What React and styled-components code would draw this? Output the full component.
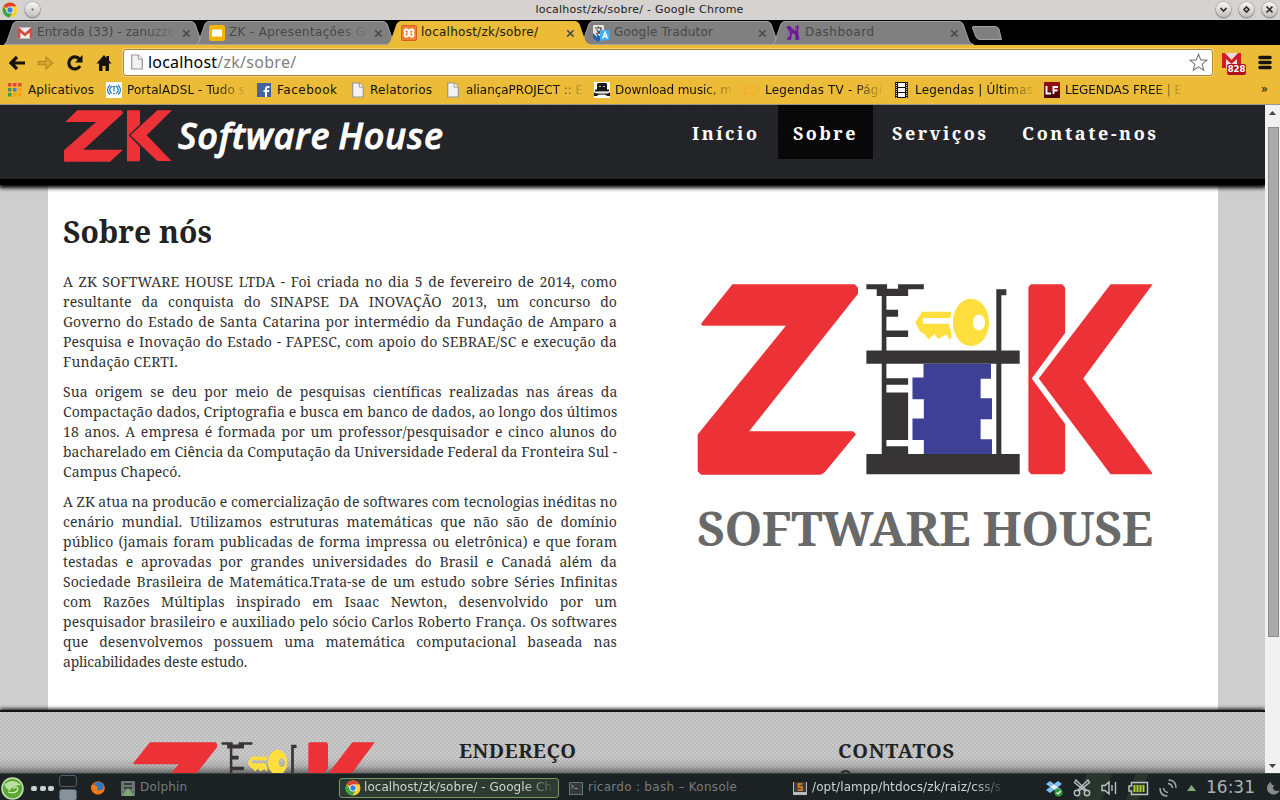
import React, { useLayoutEffect, useRef } from "react";
import styled, { createGlobalStyle, css } from "styled-components";

const GlobalStyle = createGlobalStyle`
  * { box-sizing: border-box; }
  body { margin: 0; background: #000; }
  h1, h2, p { margin: 0; }
  svg { display: block; flex: none; }
`;

const ui = '"DejaVu Sans", sans-serif';
const serif = '"Droid Serif", "Noto Serif", "DejaVu Serif Condensed", "DejaVu Serif", serif';

/* Text whose tracking is adjusted so that it spans a given width. */
const FitSpan = styled.span`
  display: inline-block;
  white-space: pre;
`;
function Fit({ width, children }) {
  const ref = useRef(null);
  useLayoutEffect(() => {
    const el = ref.current;
    el.style.letterSpacing = "0px";
    const natural = el.getBoundingClientRect().width;
    el.style.letterSpacing = (width - natural) / Math.max(1, children.length - 1) + "px";
  }, [width, children]);
  return <FitSpan ref={ref}>{children}</FitSpan>;
}

const Screen = styled.div`
  width: 1280px;
  height: 800px;
  overflow: hidden;
  display: flex;
  flex-direction: column;
  font-family: ${ui};
`;

/* ---------- window title ---------- */
const TitleBar = styled.header`
  height: 20px;
  flex: none;
  display: flex;
  align-items: center;
  justify-content: space-between;
  padding: 0 3px 1px 2px;
  background: #d6d2cf;
  color: #1c1c1c;
  font-size: 11px;
`;
const ButtonGroup = styled.div`
  display: flex;
  align-items: center;
  justify-content: ${(p) => (p.$end ? "flex-end" : "flex-start")};
  gap: ${(p) => p.$gap}px;
  width: 68px;
`;
const WindowTitle = styled.div`
  padding: 1px 0 0 0;
  line-height: 18px;
`;
const RoundButton = styled.span`
  width: 15px;
  height: 15px;
  border-radius: 50%;
  display: grid;
  place-items: center;
  background: linear-gradient(#f8f7f6, #c2bfbc);
  box-shadow: 0 1px 2px #777, 0 0 0 0.5px #999;
`;

/* ---------- tabs ---------- */
const TabStrip = styled.nav`
  height: 25px;
  flex: none;
  display: flex;
  align-items: flex-end;
  padding-left: 4px;
  background: #000;
`;
const Tab = styled.div`
  position: relative;
  width: 202px;
  height: 25px;
  margin-right: -10px;
  flex: none;
  z-index: ${(p) => (p.$active ? 2 : 1)};
  display: flex;
  align-items: center;
  padding: 1px 15px 0 13px;
  color: ${(p) => (p.$active ? "#1a1a10" : "#474747")};
  font-size: 12px;
`;
const TabShape = styled.svg`
  position: absolute;
  left: 0;
  top: 0;
  z-index: -1;
`;
const TabTitle = styled.div`
  flex: 1;
  margin: 0 6px 0 4px;
  height: 18px;
  line-height: 17px;
  overflow: hidden;
  white-space: nowrap;
  ${(p) => p.$fade && css`mask-image: linear-gradient(90deg, #000 110px, transparent 143px);`}
`;
const NewTab = styled.svg`
  margin: 0 0 4px 7px;
  align-self: flex-end;
`;

/* ---------- toolbar ---------- */
const Toolbar = styled.div`
  height: 35px;
  flex: none;
  display: flex;
  align-items: center;
  background: #ecbb37;
  padding: 0 8px 0 8px;
`;
const NavIcons = styled.div`
  display: flex;
  align-items: center;
  gap: 11px;
  width: 115px;
`;
const AddressBar = styled.div`
  width: 1090px;
  height: 27px;
  display: flex;
  align-items: center;
  padding: 0 4px 1px 7px;
  background: #fff;
  border: 1px solid #a8852a;
  border-radius: 3px;
  box-shadow: 0 0 0 1px #f2d078;
  color: #000;
  font-size: 16px;
`;
const Url = styled.div`
  flex: 1;
  margin-left: 5px;
  font-family: "Noto Sans", sans-serif;
  line-height: 22px;
  white-space: nowrap;
  i { font-style: normal; color: #808080; }
`;
const MailBadge = styled.div`
  position: relative;
  margin: 5px 12px 0 9px;
  width: 24px;
  height: 24px;
`;
const BadgeCount = styled.span`
  position: absolute;
  left: 5px;
  top: 11px;
  width: 19px;
  height: 11px;
  border-radius: 2px;
  background: #b3101e;
  color: #fff;
  font: bold 8.5px/11px ${ui};
  text-align: center;
`;

/* ---------- bookmarks ---------- */
const BookmarkBar = styled.div`
  height: 25px;
  flex: none;
  display: flex;
  align-items: flex-start;
  background: #ecbb37;
  border-bottom: 1px solid #98958c;
  color: #14130b;
  font-size: 12px;
`;
const Bookmark = styled.div`
  width: ${(p) => p.$w}px;
  height: 20px;
  display: flex;
  align-items: center;
  gap: ${(p) => p.$gap ?? 4}px;
  flex: none;
`;
const BookmarkText = styled.div`
  width: ${(p) => p.$w + 1}px;
  line-height: 18px;
  height: 19px;
  overflow: hidden;
  white-space: nowrap;
  ${(p) => p.$fade && css`mask-image: linear-gradient(90deg, #000 ${p.$w - 28}px, transparent ${p.$w + 2}px);`}
`;
const Overflow = styled.div`
  margin-left: auto;
  padding-right: 12px;
  line-height: 19px;
`;

/* ---------- page ---------- */
const Viewport = styled.div`
  height: 668px;
  flex: none;
  display: flex;
`;
const Page = styled.div`
  width: 1265px;
  height: 668px;
  overflow: hidden;
  background: #cecece;
  font-family: ${serif};
`;
const SiteHeader = styled.div`
  position: relative;
  height: 80px;
  display: flex;
  justify-content: space-between;
  border-bottom: 6px solid #000;
  box-shadow: 0 2px 4px 1px #000;
  background:
    repeating-linear-gradient(90deg, rgba(255,255,255,.012) 0 1px, transparent 1px 3px),
    repeating-linear-gradient(0deg, rgba(0,0,0,.06) 0 1px, transparent 1px 3px),
    #232428;
`;
const Brand = styled.div`
  display: flex;
  align-items: flex-start;
  padding: 4.5px 0 0 64px;
`;
const BrandName = styled.div`
  margin: 0 0 0 6px;
  font: italic 600 36px/51px "Open Sans", "Noto Sans", sans-serif;
  word-spacing: -2px;
  color: #fff;
  -webkit-text-stroke: 0.8px #fff;
`;
const Menu = styled.nav`
  display: flex;
  gap: 4px;
  padding-right: 93px;
`;
const MenuItem = styled.a`
  width: ${(p) => p.$w}px;
  height: 54px;
  padding-left: 15px;
  background: ${(p) => (p.$active ? "#080808" : "transparent")};
  color: #fff;
  font-size: 18px;
  font-weight: bold;
  line-height: 56px;
`;
const Main = styled.main`
  width: 1170px;
  height: 525px;
  margin-left: 48px;
  padding: 27px 0 0 15px;
  background: #fff;
  display: flex;
  color: #333;
`;
const About = styled.section`
  width: 554px;
`;
const Heading = styled.h1`
  height: 60px;
  font-size: 30px;
  font-weight: bold;
  line-height: 40px;
  color: #222;
`;
const Paragraph = styled.p`
  margin-bottom: 10px;
  font-size: 14px;
  line-height: 20px;
`;
const Line = styled.span`
  display: block;
  height: 20px;
  white-space: nowrap;
`;
const LogoBlock = styled.section`
  margin: 72px 0 0 80px;
  width: 458px;
`;
const LogoCaption = styled.div`
  margin-top: 23px;
  font-size: 48px;
  line-height: 60px;
  font-weight: bold;
  color: #696969;
`;
const Footer = styled.footer`
  position: relative;
  height: 63px;
  display: flex;
  padding-left: 131px;
  border-top: 2px solid #151515;
  box-shadow: 0 -1px 4px #000;
  background:
    linear-gradient(transparent 46px, rgba(0,0,0,.1) 54px, rgba(0,0,0,.45) 61px),
    linear-gradient(90deg, #b4b4b4 2px, transparent 2px) 0 0 / 4px 4px,
    #cacaca;
  background:
    linear-gradient(transparent 46px, rgba(0,0,0,.1) 54px, rgba(0,0,0,.45) 61px),
    conic-gradient(#bababa 25%, transparent 0 50%, #bababa 0 75%, transparent 0) 0 0 / 4px 4px,
    #cacaca;
`;
const FooterLogo = styled.div`
  width: 328px;
  padding-top: 30px;
`;
const FooterColumn = styled.div`
  width: 379px;
  padding-top: 26px;
  font-size: 20px;
  line-height: 26px;
  font-weight: bold;
  color: #222;
`;
const Dot = styled.i`
  display: block;
  width: 11px;
  height: 11px;
  margin: 6px 0 0 2px;
  border: 2px solid #222;
  border-radius: 50%;
`;
const ScrollTrack = styled.div`
  width: 15px;
  display: flex;
  flex-direction: column;
  align-items: center;
  background: #f1f1f1;
`;
const ScrollEnd = styled.div`
  height: ${(p) => p.$h}px;
  padding-top: 6px;
`;
const Thumb = styled.div`
  width: 11px;
  height: 510px;
  margin-left: 1px;
  background: #aaa;
  border: 1px solid #8c8c8c;
`;

/* ---------- desktop panel ---------- */
const Panel = styled.footer`
  height: 27px;
  flex: none;
  display: flex;
  align-items: center;
  border-top: 1px solid #39403f;
  background:
    linear-gradient(110deg, transparent 1020px, #29352b 1022px 1043px, transparent 1046px 1066px, #29352b 1068px 1078px, transparent 1080px),
    #1c2224;
  font-size: 12px;
  color: #cdd2d2;
  padding-top: 2px;
`;
const Launcher = styled.div`
  width: 107px;
  display: flex;
  align-items: center;
  padding-left: 1px;
`;
const Dots = styled.div`
  display: flex;
  gap: 2.5px;
  margin: 0 5px 0 7px;
  i { width: 6px; height: 5px; border-radius: 2px; background: #c6d2d2; }
`;
const Pager = styled.div`
  display: flex;
  flex-direction: column;
  gap: 2px;
  margin-right: 14px;
  i { width: 18px; height: 12px; border-radius: 3px; border: 1px solid #50606a; }
  i + i { background: #87939a; }
`;
const Task = styled.div`
  width: ${(p) => p.$w}px;
  height: 20px;
  flex: none;
  display: flex;
  align-items: center;
  gap: ${(p) => p.$gap ?? 5}px;
  margin-left: ${(p) => p.$ml}px;
  padding-left: 5px;
  border-radius: 3px;
  border: 1px solid ${(p) => (p.$active ? "#729968" : "transparent")};
  background: ${(p) => (p.$active ? "#2d3b30" : "transparent")};
  color: ${(p) => (p.$dim ? "#747d7e" : "#ced4d3")};
`;
const TaskText = styled.div`
  flex: 1;
  height: 18px;
  line-height: 16px;
  overflow: hidden;
  white-space: nowrap;
  ${(p) => p.$fade && css`mask-image: linear-gradient(90deg, #000 ${p.$fade}px, transparent ${p.$fade + 32}px);`}
`;
const Tray = styled.div`
  display: flex;
  align-items: center;
  margin-left: auto;
  gap: 10px;
`;
const Clock = styled.div`
  font-size: 17px;
  line-height: 20px;
  color: #a9b2b3;
  padding-bottom: 2px;
`;

/* ---------- icons ---------- */
const Gmail = () => (
  <svg width="16" height="16" viewBox="0 0 16 16">
    <path d="M1 2.500h14v11H1z" fill="#eee" />
    <path d="M1 13.500V2.500h1l6 5.500 6-5.500h1v11h-2.300V7.500L8 11.500 3.300 7.500v6z" fill="#d54b3d" />
  </svg>
);
const Slides = () => (
  <svg width="16" height="16"><rect width="16" height="16" rx="2" fill="#f4b400" /><rect x="3" y="4.500" width="10" height="7" fill="#fff" /></svg>
);
const Xampp = () => (
  <svg width="16" height="16" viewBox="0 0 16 16">
    <rect width="16" height="16" rx="2" fill="#d9601c" />
    <rect x="1" y="1" width="14" height="14" rx="1" fill="#ee7f35" />
    <path d="M5 4.200Q7 4.200 8 6.500 9 4.200 11 4.200 13 5 12.300 7L11.500 8l.8 1Q13 11.500 11 11.800 9 11.800 8 9.500 7 11.800 5 11.800 3 11 3.700 9L4.500 8l-.8-1Q3 5 5 4.200z" fill="none" stroke="#fff" strokeWidth="1.900" />
    <path d="M6.500 8h3" stroke="#fff" strokeWidth="2" />
  </svg>
);
const Translate = () => (
  <svg width="17" height="17" viewBox="0 0 17 17">
    <rect width="11" height="12" rx="1" fill="#e4e4dc" />
    <path d="M2 3h7M5.500 1.500V3M3 9c3-1 5-3 5-6M3.500 4.500C5 7 6 8 8 9" stroke="#444" strokeWidth="1.200" fill="none" />
    <path d="M0 8l4 4V9l5 4-4 4-5-4z" fill="#1e62b8" />
    <path d="M7 5h9.500v10L7 16z" fill="#45aaf0" />
    <path d="M9.500 13.500L12 7l2.500 6.500M10.300 11.500h3.400" stroke="#fff" strokeWidth="1.300" fill="none" />
  </svg>
);
const Purple = () => (
  <svg width="16" height="16" viewBox="0 0 16 16">
    <path d="M1 2l3.500-1.500L8 4l2 2V1l4-.5-1 6 1.500 8-4 .8-.5-6L7 8.500 6 15l-4.500-.5L4 11 3.500 5z" fill="#6b1b9a" />
    <path d="M11 1v5M4 12l1-6" stroke="#a04fc8" />
  </svg>
);
const Close = () => (
  <svg width="9" height="9" viewBox="0 0 9 9"><path d="M1.200 1.200l6.400 6.400M7.600 1.200L1.200 7.600" stroke="#484848" strokeWidth="1.500" /></svg>
);
const Chrome = () => (
  <svg width="16" height="16" viewBox="0 0 16 16">
    <circle cx="8" cy="8" r="7.500" fill="#fbd130" />
    <path d="M8 8L1.500 4.200A7.500 7.500 0 0 1 14.500 4.300L8 4.500z" fill="#dd4433" />
    <path d="M1.500 4.300A7.500 7.500 0 0 0 7.500 15.500L11 9.500 5 9.500z" fill="#3fa34d" />
    <circle cx="8" cy="8" r="3.500" fill="#fff" /><circle cx="8" cy="8" r="2.700" fill="#3b7de0" />
  </svg>
);
const Doc = ({ s = 16 }) => (
  <svg width="12" height={s} viewBox="0 0 12 16">
    <path d="M.7 1h6.600l4 4.200v9.800H.7z" fill="#f3f3f3" stroke="#979797" strokeWidth="1.200" />
    <path d="M7.300 1v4.200h4" fill="#fff" stroke="#979797" />
  </svg>
);
const Apps = () => (
  <svg width="14" height="14">
    {["#e8453c", "#e8453c", "#e8453c", "#3c9a4e", "#3b7de0", "#f7a400", "#3c9a4e", "#f7a400", "#f7a400"].map((c, i) => (
      <rect key={i} x={(i % 3) * 5} y={Math.floor(i / 3) * 5} width="3.500" height="3.500" fill={c} />
    ))}
  </svg>
);
const Portal = () => (
  <svg width="16" height="16" viewBox="0 0 16 16">
    <rect width="16" height="16" fill="#fff" />
    <path d="M4 3Q-1 8 4 12.500M12 3q5 5 0 9.500M6 4Q1.500 8 6 11.500M10 4q4.500 4 0 7.500M6.500 4.500h3M8 4.500v5M7 11.500h2" fill="none" stroke="#2078c0" strokeWidth="1.200" />
  </svg>
);
const Facebook = () => (
  <svg width="14" height="14" viewBox="0 0 14 14"><rect width="14" height="14" fill="#4562a5" /><path d="M9 14V8.500M12.500 4H11q-2 0-2 2v8M6.500 8H12" stroke="#fff" strokeWidth="2" fill="none" /></svg>
);
const Pirate = () => (
  <svg width="16" height="16" viewBox="0 0 16 16">
    <rect width="16" height="16" fill="#fff" />
    <path d="M4 1h8l1 1v6H3V2zM1 7.500h14v2H1zM0 10.500l3 1h10l3-1v3.500h-3l-1-1H4l-1 1H0z" fill="#191919" />
    <path d="M5 4.500h2M9 4.500h2M5 12h6M4 10h8" stroke="#bbb" />
  </svg>
);
const Cloud = () => (
  <svg width="16" height="16" viewBox="0 0 16 16"><path d="M3 5q5-3 8 0 5 0 4 3 0 4-4 4H3Q0 11 2 8 0 6 3 5z" fill="#efb935" stroke="#f3ac2c" strokeWidth="1.200" /></svg>
);
const Film = () => (
  <svg width="13" height="16" viewBox="0 0 13 16">
    <rect width="13" height="16" fill="#111" />
    <path d="M3 1h7v4H3zM3 6h7v4H3zM3 11h7v4H3z" fill="#f6f6f6" />
    <path d="M1.300 1v15M11.700 1v15" stroke="#fff" strokeDasharray="1 1" />
  </svg>
);
const LF = () => (
  <svg width="16" height="16" viewBox="0 0 16 16"><rect width="16" height="16" rx="1" fill="#8f0c0f" /><rect y="9" width="16" height="7" fill="#4d0506" /><path d="M2.500 4v7.500h4.500M9.500 12V5h4.500M9.500 8.500h4" fill="none" stroke="#fff" strokeWidth="1.900" /></svg>
);
const Firefox = () => (
  <svg width="14" height="14" viewBox="0 0 14 14"><circle cx="7" cy="7" r="6.800" fill="#e66000" /><circle cx="7.500" cy="5.500" r="4.800" fill="#2f78c4" /><path d="M.5 4Q3 3 5 5l2 1-1 2q2 3 6 0 2-4 0-6 3 6 0 9-6 4-10 0-3-4-1.500-7z" fill="#f07a18" /></svg>
);

const Z_PATH = "M160 42H526L536 52V70L210 482H521L530 491L442 598Q431 612 420 612H66L56 602V492L320 166H70L66 160Z";
const EmblemLogo = ({ width, height }) => (
  <svg width={width} height={height} viewBox="54 41 1365 572" preserveAspectRatio="none">
    <g fill="#ec3237">
      <path d={Z_PATH} />
      <path d="M1054 42H1148L1156 52V188L1056 324L1156 460V600L1148 611H1054L1046 601V50Z" />
      <path d="M1292 42H1418L1210 324L1416 606V611H1292L1077 324Z" />
    </g>
    <g fill="#373435">
      <path d="M561 42H623V55H656V42H733V57H686V77H621V118H656V139H621V180H686V200H621V240H950V57H980V75H965V240H1020V280H965V550H1020V611H561V550H607V280H561V240H607V77H592V57H561Z M621 280V323H686V343H621V366H686V508H621V527H686V550H950V280Z" fillRule="evenodd" />
    </g>
    <path d="M732 280H934V325H903V383H937V446H903V506H937V550H733V508H699V444H733V386H699V321H732Z" fill="#3e4095" />
    <g fill="#ffdf3d">
      <path d="M728 124H815L812 143H730V160H808L816 190V202L810 207L801 192L776 206L765 190L748 207L734 190L722 184L707 156Z" />
      <path fillRule="evenodd" d="M874 85a54 71 0 1 0 .1 0zM898 132a18 24 0 1 1-.1 0z" />
    </g>
  </svg>
);
const HeaderLogo = () => (
  <svg width="108" height="52" viewBox="192 29 324 156">
    <g fill="#ec3237">
      <path d="M232 30H364L368 34V40L250 148H366V151L330 184H194L192 181V150L288 65H196Z" />
      <path d="M383 30H418L420 33V72L386 105L420 140V180L417 183H381V32Z" />
      <path d="M472 30H516L440 105L515 182H472L391 105Z" />
    </g>
  </svg>
);

const TABS = [
  { icon: <Gmail />, text: "Entrada (33) - zanuzzo", w: 138, fade: true },
  { icon: <Slides />, text: "ZK - Apresentações G", w: 136, fade: true },
  { icon: <Xampp />, text: "localhost/zk/sobre/", w: 117, active: true },
  { icon: <Translate />, text: "Google Tradutor", w: 99 },
  { icon: <Purple />, text: "Dashboard", w: 69 },
];
const BOOKMARKS = [
  { icon: <Apps />, text: "Aplicativos", w: 66, cell: 98, gap: 6 },
  { icon: <Portal />, text: "PortalADSL - Tudo s", w: 118, cell: 151, gap: 5, fade: true },
  { icon: <Facebook />, text: "Facebook", w: 60, cell: 95, gap: 6 },
  { icon: <Doc />, text: "Relatorios", w: 62, cell: 95, gap: 6 },
  { icon: <Doc />, text: "aliançaPROJECT :: E", w: 117, cell: 147, gap: 7, fade: true },
  { icon: <Pirate />, text: "Download music, m", w: 117, cell: 149, gap: 5, fade: true },
  { icon: <Cloud />, text: "Legendas TV - Pági", w: 117, cell: 152, gap: 6, fade: true },
  { icon: <Film />, text: "Legendas | Últimas", w: 118, cell: 149, gap: 7, fade: true },
  { icon: <LF />, text: "LEGENDAS FREE | E", w: 117, cell: 150, gap: 5, fade: true },
];
const TEXT = [
  [
    ["A ZK SOFTWARE HOUSE LTDA - Foi criada no dia 5 de fevereiro de 2014, como"],
    ["resultante da conquista do SINAPSE DA INOVAÇÃO 2013, um concurso do"],
    ["Governo do Estado de Santa Catarina por intermédio da Fundação de Amparo a"],
    ["Pesquisa e Inovação do Estado - FAPESC, com apoio do SEBRAE/SC e execução da"],
    ["Fundação CERTI.", 115],
  ],
  [
    ["Sua origem se deu por meio de pesquisas científicas realizadas nas áreas da"],
    ["Compactação dados, Criptografia e busca em banco de dados, ao longo dos últimos"],
    ["18 anos. A empresa é formada por um professor/pesquisador e cinco alunos do"],
    ["bacharelado em Ciência da Computação da Universidade Federal da Fronteira Sul -"],
    ["Campus Chapecó.", 118],
  ],
  [
    ["A ZK atua na producão e comercialização de softwares com tecnologias inéditas no"],
    ["cenário mundial. Utilizamos estruturas matemáticas que não são de domínio"],
    ["público (jamais foram publicadas de forma impressa ou eletrônica) e que foram"],
    ["testadas e aprovadas por grandes universidades do Brasil e Canadá além da"],
    ["Sociedade Brasileira de Matemática.Trata-se de um estudo sobre Séries Infinitas"],
    ["com Razões Múltiplas inspirado em Isaac Newton, desenvolvido por um"],
    ["pesquisador brasileiro e auxiliado pelo sócio Carlos Roberto França. Os softwares"],
    ["que desenvolvemos possuem uma matemática computacional baseada nas"],
    ["aplicabilidades deste estudo.", 184],
  ],
];

/* A justified line: the slack goes between the words, after a slight tracking. */
function TextLine({ text, width }) {
  const ref = useRef(null);
  useLayoutEffect(() => {
    const el = ref.current;
    const target = width ?? 554;
    el.style.letterSpacing = "0px";
    el.style.wordSpacing = "0px";
    const spare = target - el.getBoundingClientRect().width;
    if (width || spare < 0) {
      el.style.letterSpacing = spare / text.length + "px";
      return;
    }
    const tracking = Math.min(0.08, spare / text.length);
    el.style.letterSpacing = tracking + "px";
    el.style.wordSpacing = (spare - tracking * text.length) / (text.split(" ").length - 1) + "px";
  }, [text, width]);
  return <Line><FitSpan ref={ref}>{text}</FitSpan></Line>;
}

export default function App() {
  return (
    <Screen>
      <GlobalStyle />
      <TitleBar>
        <ButtonGroup $gap={7}>
          <Chrome />
          <RoundButton><svg width="3" height="3"><circle cx="1.500" cy="1.500" r="1" fill="#555" /></svg></RoundButton>
        </ButtonGroup>
        <WindowTitle><Fit width={208}>localhost/zk/sobre/ - Google Chrome</Fit></WindowTitle>
        <ButtonGroup $gap={8} $end>
          {["M1.500 3l3 3 3-3", "M4.500 2l2.500 2.500-2.500 2.500-2.500-2.500z", "M1.500 1.500l6 6M7.500 1.500l-6 6"].map((d) => (
            <RoundButton key={d}><svg width="9" height="9"><path d={d} fill="none" stroke="#2b2b2b" strokeWidth="1.600" /></svg></RoundButton>
          ))}
        </ButtonGroup>
      </TitleBar>
      <TabStrip>
        {TABS.map((t) => (
          <Tab key={t.text} $active={t.active}>
            <TabShape width="202" height="25">
              <path d={t.active ? "M-2 25Q2 24 3 21L9 4Q10 1.500 13 1.500H187Q190 1.500 191 4L197 21Q199 25 204 25Z" : "M0 24.500Q2 24 3 21L9 4Q10 1.500 13 1.500H187Q190 1.500 191 4L197 21Q199 24.500 202 24.500Z"} fill={t.active ? "#ecbb37" : "#808080"} stroke={t.active ? "#ecbb37" : "#a3a3a3"} />
            </TabShape>
            {t.icon}
            <TabTitle $fade={t.fade}><Fit width={t.w}>{t.text}</Fit></TabTitle>
            <Close />
          </Tab>
        ))}
        <NewTab width="32" height="16"><path d="M3 1.500H24Q27 1.500 28 4L30.500 14.500H9Q6 14.500 5 12L1.500 3Q1 1.500 3 1.500Z" fill="#808080" stroke="#a3a3a3" /></NewTab>
      </TabStrip>
      <Toolbar>
        <NavIcons>
          <svg width="18" height="18" viewBox="0 0 18 18"><path d="M17 9H4M9 3L3 9l6 6" fill="none" stroke="#15130a" strokeWidth="3.200" /></svg>
          <svg width="18" height="18" viewBox="0 0 18 18"><path d="M1.500 7.500H9V3l6.500 6L9 15v-4.500H1.500z" fill="#d8ab32" stroke="#b98f25" strokeWidth="1.400" /></svg>
          <svg width="18" height="18" viewBox="0 0 18 18"><path d="M13.500 5.200A6 6 0 1 0 14 12" fill="none" stroke="#15130a" strokeWidth="3.200" /><path d="M16.500 1v7.500H9z" fill="#15130a" /></svg>
          <svg width="18" height="18" viewBox="0 0 18 18"><path d="M9 1L1.500 9.500H4V17h3.500v-5h3v5H14V9.500h2.500L14 6.500V2h-2.500v2z" fill="#15130a" /></svg>
        </NavIcons>
        <AddressBar>
          <Doc />
          <Url><Fit width={69}>localhost</Fit><i><Fit width={79}>/zk/sobre/</Fit></i></Url>
          <svg width="19" height="19" viewBox="0 0 19 19"><path d="M9.500 1.200l2.300 5.700 6 .4-4.600 3.900 1.500 6-5.200-3.300-5.200 3.300 1.500-6L1.200 7.300l6-.4z" fill="#fff" stroke="#777" strokeWidth="1.100" /></svg>
        </AddressBar>
        <MailBadge>
          <svg width="19" height="15" viewBox="0 0 19 15"><rect width="19" height="15" rx="1" fill="#f3dcdc" /><path d="M0 15V0h3l6.500 7L16 0h3v15h-4V6l-5.500 5L4 6v9z" fill="#d51a25" /></svg>
          <BadgeCount>828</BadgeCount>
        </MailBadge>
        <svg width="14" height="15"><path d="M2 2.500h10M2 7.500h10M2 12.500h10" stroke="#15130a" strokeWidth="3.600" strokeLinecap="round" /></svg>
      </Toolbar>
      <BookmarkBar>
        <Bookmark $w={8} />
        {BOOKMARKS.map((b) => (
          <Bookmark key={b.text} $w={b.cell} $gap={b.gap}>
            {b.icon}
            <BookmarkText $w={b.w} $fade={b.fade}><Fit width={b.w}>{b.text}</Fit></BookmarkText>
          </Bookmark>
        ))}
        <Overflow>»</Overflow>
      </BookmarkBar>
      <Viewport>
        <Page>
          <SiteHeader>
            <Brand>
              <HeaderLogo />
              <BrandName><Fit width={265}>Software House</Fit></BrandName>
            </Brand>
            <Menu>
              <MenuItem $w={97}><Fit width={65}>Início</Fit></MenuItem>
              <MenuItem $w={95} $active><Fit width={62.5}>Sobre</Fit></MenuItem>
              <MenuItem $w={126}><Fit width={94}>Serviços</Fit></MenuItem>
              <MenuItem $w={165}><Fit width={134}>Contate-nos</Fit></MenuItem>
            </Menu>
          </SiteHeader>
          <Main>
            <About>
              <Heading><Fit width={149}>Sobre nós</Fit></Heading>
              {TEXT.map((lines, i) => (
                <Paragraph key={i}>
                  {lines.map(([text, width]) => <TextLine key={text} text={text} width={width} />)}
                </Paragraph>
              ))}
            </About>
            <LogoBlock>
              <EmblemLogo width={456} height={191} />
              <LogoCaption><Fit width={456}>SOFTWARE HOUSE</Fit></LogoCaption>
            </LogoBlock>
          </Main>
          <Footer>
            <FooterLogo><EmblemLogo width={244} height={102} /></FooterLogo>
            <FooterColumn><Fit width={117}>ENDEREÇO</Fit></FooterColumn>
            <FooterColumn><Fit width={116}>CONTATOS</Fit><Dot /></FooterColumn>
          </Footer>
        </Page>
        <ScrollTrack>
          <ScrollEnd $h={22}><svg width="7" height="4"><path d="M3.500 0L7 4H0z" fill="#444" /></svg></ScrollEnd>
          <Thumb />
          <ScrollEnd $h={136}><svg width="7" height="128"><path d="M0 121h7l-3.500 4z" fill="#444" /></svg></ScrollEnd>
        </ScrollTrack>
      </Viewport>
      <Panel>
        <Launcher>
          <svg width="23" height="23" viewBox="0 0 23 23">
            <circle cx="11.500" cy="11.500" r="10.500" fill="#5da832" stroke="#c6e3b4" strokeWidth="1.500" />
            <path d="M3 8Q11 0 20 8 12 8 8 14z" fill="#b9dfa3" /><path d="M7 15q6 2 9-1 2-3-1-4-3 0-2 2" fill="none" stroke="#e0f2d6" strokeWidth="1.100" />
          </svg>
          <Dots><i /><i /><i /></Dots>
          <Pager><i /><i /></Pager>
          <Firefox />
        </Launcher>
        <Task $w={210} $ml={8} $dim>
          <svg width="14" height="15"><rect width="14" height="15" rx="1" fill="#6e7575" /><path d="M3 3h8M3 7h8" stroke="#2a2e2f" strokeWidth="1.500" /><path d="M7 7l6 8H1z" fill="#7da873" /></svg>
          <TaskText><Fit width={47}>Dolphin</Fit></TaskText>
        </Task>
        <Task $w={220} $ml={14} $active $gap={3}>
          <Chrome />
          <TaskText $fade={160}><Fit width={188}>localhost/zk/sobre/ - Google Ch</Fit></TaskText>
        </Task>
        <Task $w={210} $ml={4} $dim>
          <svg width="14" height="13"><rect x=".5" y=".5" width="13" height="12" fill="#333a3c" stroke="#6c7576" /><path d="M2.500 3l2 1.500-2 1.500M5.500 6.500h3" fill="none" stroke="#9aa" /></svg>
          <TaskText><Fit width={149}>ricardo : bash – Konsole</Fit></TaskText>
        </Task>
        <Task $w={217} $ml={14}>
          <svg width="14" height="13"><rect width="14" height="13" fill="#bbb" /><rect x="1" width="12" height="10" fill="#3b3b3b" /><path d="M9.500 2H5.500v3h3.500v3H4.500" fill="none" stroke="#f28c1b" strokeWidth="1.500" /></svg>
          <TaskText $fade={162}><Fit width={189}>/opt/lampp/htdocs/zk/raiz/css/s</Fit></TaskText>
        </Task>
        <Tray>
          <svg width="17" height="17" viewBox="0 0 17 17">
            <path d="M4 1l4 3-4 3-4-3zM12 1l4 3-4 3-4-3zM4 7l4 3-4 3-4-3zM12 7l4 3-4 3-4-3z" fill="#7cc0f4" /><path d="M8 4l4 3-4 3-4-3z" fill="#e8f4fd" />
            <circle cx="12.500" cy="12.500" r="4" fill="#2f9c3b" /><path d="M10.500 12.500l1.500 1.500 2.700-3" fill="none" stroke="#fff" strokeWidth="1.200" />
          </svg>
          <svg width="18" height="18" viewBox="0 0 18 18" fill="none" stroke="#b9c4c4" strokeWidth="1.400"><circle cx="4" cy="14" r="2.700" /><circle cx="14" cy="14" r="2.700" /><path d="M6 12L16.500 3.500 15 1 4.500 11.500M12 12L1.500 3.500 3 1l10.500 10.500" /></svg>
          <svg width="17" height="16" viewBox="0 0 17 16" fill="none" stroke="#b9c4c4" strokeWidth="1.400"><path d="M1 5.500h3l4-3.500v12l-4-3.500H1zM11 5v6M14.500 2v12" /></svg>
          <svg width="21" height="15" viewBox="0 0 21 15"><path d="M3.500 1.500h16v12h-16V10H1V5h2.500z" fill="none" stroke="#b9c4c4" strokeWidth="1.500" /><path d="M6.500 4v7M9.500 4v7M12.500 4v7M15.500 4v7" stroke="#b0d235" strokeWidth="2" /></svg>
          <svg width="18" height="18" viewBox="0 0 18 18" fill="none" stroke="#a0abac" strokeWidth="1.500"><path d="M9 4.500Q13 5 13.500 9M9.500 1Q17 1 17 9M9 13.500Q5 13 4.500 9M8.500 17Q1 17 1 9" /></svg>
          <svg width="9" height="6"><path d="M4.500 0L9 6H0z" fill="#80ac78" /></svg>
          <Clock><Fit width={49}>16:31</Fit></Clock>
          <svg width="15" height="16" viewBox="0 0 15 16"><path d="M6 2a6.500 6.500 0 1 0 8.500 8.500Q9 12 8 8q0-2 2-3Q6 6 6 2z" fill="#888b8c" /></svg>
        </Tray>
      </Panel>
    </Screen>
  );
}
